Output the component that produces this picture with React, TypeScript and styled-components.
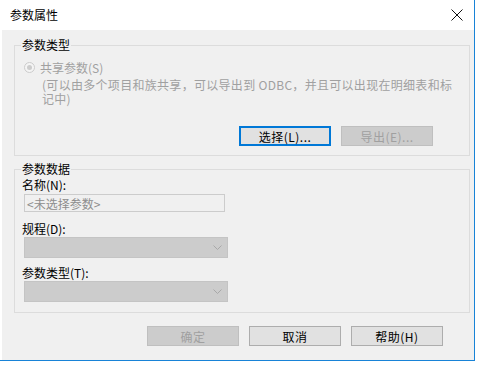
import React from "react";
import styled, { createGlobalStyle } from "styled-components";

const GlobalStyle = createGlobalStyle`
  html, body {
    margin: 0;
    padding: 0;
    background: #ffffff;
  }
  body {
    font-family: "Noto Sans CJK SC", "Noto Sans", sans-serif;
    font-size: 12px;
    color: #000;
  }
`;

const Window = styled.div`
  width: 474px;
  height: 360px;
  border-right: 1px solid #1883d7;
  border-bottom: 1px solid #1883d7;
  background: #fff;
  display: flex;
  flex-direction: column;
`;

const TitleBar = styled.div`
  height: 30px;
  display: flex;
  align-items: center;
  justify-content: space-between;
  padding: 0 10px 0 10px;
  box-sizing: border-box;
`;

const Title = styled.span`
  font-size: 12px;
  line-height: 16px;
`;

const CloseButton = styled.div`
  width: 12px;
  height: 12px;
  display: flex;
  margin-right: 1px;
`;

const Body = styled.div`
  flex: 1;
  margin-left: 2px;
  background: #f0f0f0;
  padding: 7px 4px 0 12px;
  display: flex;
  flex-direction: column;
`;

const Group = styled.fieldset<{ $padBottom: number }>`
  margin: 0;
  min-width: 0;
  border: 1px solid #dcdcdc;
  padding: 0 6px ${(p) => p.$padBottom}px 6px;
  & + & {
    margin-top: 5px;
  }
`;

const Legend = styled.legend`
  padding: 0 1px;
  line-height: 16px;
  font-size: 12px;
`;

const RadioRow = styled.div`
  display: flex;
  align-items: center;
  margin: 7px 0 0 3px;
  height: 14px;
  color: #a0a0a0;
  gap: 5px;
`;

const Radio = styled.span`
  width: 11px;
  height: 11px;
  box-sizing: border-box;
  border-radius: 50%;
  border: 1px solid #cccccc;
  background: #f4f4f4;
  display: flex;
  align-items: center;
  justify-content: center;
  &::after {
    content: "";
    width: 5px;
    height: 5px;
    border-radius: 50%;
    background: #cccccc;
  }
`;

const Description = styled.div`
  margin: 4px 0 0 21px;
  color: #a0a0a0;
  line-height: 14px;
  letter-spacing: 0.3px;
  span {
    display: block;
    white-space: nowrap;
  }
`;

const ButtonRow = styled.div<{ $mt: number; $pr: number }>`
  display: flex;
  justify-content: flex-end;
  gap: 10px;
  margin-top: ${(p) => p.$mt}px;
  padding-right: ${(p) => p.$pr}px;
`;

const Button = styled.div<{ $disabled?: boolean; $focused?: boolean }>`
  width: 92px;
  height: 20px;
  box-sizing: border-box;
  display: flex;
  align-items: center;
  justify-content: center;
  font-size: 12px;
  background: ${(p) => (p.$disabled ? "#cccccc" : "#e1e1e1")};
  border: ${(p) =>
    p.$focused ? "2px solid #0078d7" : p.$disabled ? "1px solid #bfbfbf" : "1px solid #adadad"};
  color: ${(p) => (p.$disabled ? "#a0a0a0" : "#000")};
  letter-spacing: 0.5px;
`;

const FieldLabel = styled.div<{ $mt: number }>`
  margin: ${(p) => p.$mt}px 0 0 1px;
  line-height: 14px;
`;

const TextInput = styled.div`
  margin: 2px 0 0 3px;
  width: 201px;
  height: 18px;
  box-sizing: border-box;
  border: 1px solid #cccccc;
  background: #f0f0f0;
  color: #8d8d8d;
  display: flex;
  align-items: center;
  padding-left: 2px;
`;

const Select = styled.div`
  margin: 1px 0 0 3px;
  width: 204px;
  height: 21px;
  box-sizing: border-box;
  background: #cccccc;
  border: 1px solid #c4c4c4;
  display: flex;
  align-items: center;
  justify-content: flex-end;
  padding-right: 5px;
`;

const Chevron = () => (
  <svg width="9" height="5" viewBox="0 0 9 5">
    <polyline points="0.5,0.5 4.5,4.5 8.5,0.5" fill="none" stroke="#a8a8a8" strokeWidth="1" />
  </svg>
);

const App: React.FC = () => {
  return (
    <>
      <GlobalStyle />
      <Window>
        <TitleBar>
          <Title>参数属性</Title>
          <CloseButton>
            <svg width="12" height="12" viewBox="0 0 12 12">
              <path d="M0.5 0.5 L11.5 11.5 M11.5 0.5 L0.5 11.5" stroke="#111" strokeWidth="1" />
            </svg>
          </CloseButton>
        </TitleBar>
        <Body>
          <Group $padBottom={9}>
            <Legend>参数类型</Legend>
            <RadioRow>
              <Radio />
              共享参数(S)
            </RadioRow>
            <Description>
              <span>(可以由多个项目和族共享，可以导出到 ODBC，并且可以出现在明细表和标</span>
              <span>记中)</span>
            </Description>
            <ButtonRow $mt={20} $pr={30}>
              <Button $focused>选择(L)...</Button>
              <Button $disabled>导出(E)...</Button>
            </ButtonRow>
          </Group>

          <Group $padBottom={10}>
            <Legend>参数数据</Legend>
            <FieldLabel $mt={1}>名称(N):</FieldLabel>
            <TextInput>&lt;未选择参数&gt;</TextInput>
            <FieldLabel $mt={10}>规程(D):</FieldLabel>
            <Select>
              <Chevron />
            </Select>
            <FieldLabel $mt={8}>参数类型(T):</FieldLabel>
            <Select>
              <Chevron />
            </Select>
          </Group>

          <ButtonRow $mt={13} $pr={27}>
            <Button $disabled>确定</Button>
            <Button>取消</Button>
            <Button>帮助(H)</Button>
          </ButtonRow>
        </Body>
      </Window>
    </>
  );
};

export default App;
